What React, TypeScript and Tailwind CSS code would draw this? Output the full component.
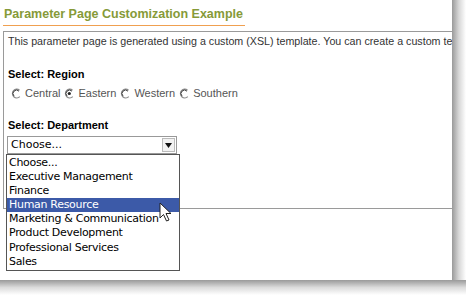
const regions = ["Central", "Eastern", "Western", "Southern"];
const departments = [
  "Choose...",
  "Executive Management",
  "Finance",
  "Human Resource",
  "Marketing & Communication",
  "Product Development",
  "Professional Services",
  "Sales",
];

const Radio = ({ checked }: { checked?: boolean }) => (
  <svg width="11" height="11" viewBox="0 0 11 11" className="shrink-0">
    <path d="M8.5 2.2A4.3 4.3 0 1 0 8.8 8.6" fill="none" stroke="#8a8a8a" strokeWidth="1.3" />
    <path d="M8 3.2A3 3 0 1 0 3 8" fill="none" stroke="#444" strokeWidth="1" />
    {checked && <circle cx="5.3" cy="5.5" r="1.6" fill="#222" />}
  </svg>
);

const Cursor = () => (
  <svg width="14" height="21" viewBox="0 0 14 21" className="absolute left-[159px] top-[202px]">
    <path d="M1 1 L1 16 L4.5 12.5 L7.5 19 L10 18 L7 11.5 L12 11.5 Z" fill="#fff" stroke="#222" strokeWidth="1" />
  </svg>
);

export default function App() {
  return (
    <div className="relative w-[466px] h-[295px] bg-white overflow-hidden font-['Liberation_Sans',Arial,sans-serif]">
      <div className="absolute right-0 top-0 w-[14px] h-[295px] bg-gradient-to-r from-[#9a9a9a] via-[#d8d8d8] to-white" />
      <div className="absolute left-0 bottom-0 w-[466px] h-[15px] bg-gradient-to-b from-[#9a9a9a] via-[#dcdcdc] to-white" />
      <div className="relative w-[452px] h-[280px] bg-white pl-[3px] pt-[1px]">
        <div className="inline-block border-b border-[#f0a050] pr-[2px] pl-[1px] pb-[4px] text-[12.5px] font-bold leading-[14px] text-[#869a38]">
          Parameter Page Customization Example
        </div>
        <div className="mt-[5px] h-[178px] overflow-hidden border border-[#9a9a9a] border-r-0 pl-[4px] pt-[3px] text-[10.7px] text-[#333]">
          <div className="whitespace-nowrap leading-[13px]">
            This parameter page is generated using a custom (XSL) template. You can create a custom template
          </div>
          <div className="mt-[20px] font-bold text-[11px] text-black leading-[13px]">Select: Region</div>
          <div className="mt-[6px] flex items-center gap-[3px] pl-[3px] text-[11px] text-[#555] leading-[13px]">
            {regions.map((r, i) => (
              <div key={r} className="flex items-center gap-[3px] mr-[1px]">
                <Radio checked={i === 1} />
                <span>{r}</span>
              </div>
            ))}
          </div>
          <div className="mt-[19px] font-bold text-[11px] text-black leading-[13px]">Select: Department</div>
        </div>
      </div>
      <div className="absolute left-[7px] top-[136px] w-[170px] h-[18px] border border-[#999] bg-white flex items-center font-['DejaVu_Sans',sans-serif] text-[11px] text-black">
        <span className="pl-[3px] flex-1 leading-[14px]">Choose...</span>
        <div className="w-[13px] h-[14px] mr-[1px] border border-[#bbb] bg-[#f2f2f2] flex items-center justify-center">
          <svg width="7" height="5" viewBox="0 0 7 5"><path d="M0 0 H7 L3.5 5 Z" fill="#111" /></svg>
        </div>
      </div>
      <div className="absolute left-[6px] top-[154px] w-[174px] border border-[#555] bg-white py-[1px] font-['DejaVu_Sans',sans-serif] text-[11px] tracking-[-0.3px] text-black">
        {departments.map((d) => (
          <div
            key={d}
            className={
              d === "Human Resource"
                ? "h-[14.1px] leading-[14px] pl-[2px] bg-[#3c5aa8] text-white whitespace-nowrap"
                : "h-[14.1px] leading-[14px] pl-[2px] whitespace-nowrap"
            }
          >
            {d}
          </div>
        ))}
      </div>
      <Cursor />
    </div>
  );
}
